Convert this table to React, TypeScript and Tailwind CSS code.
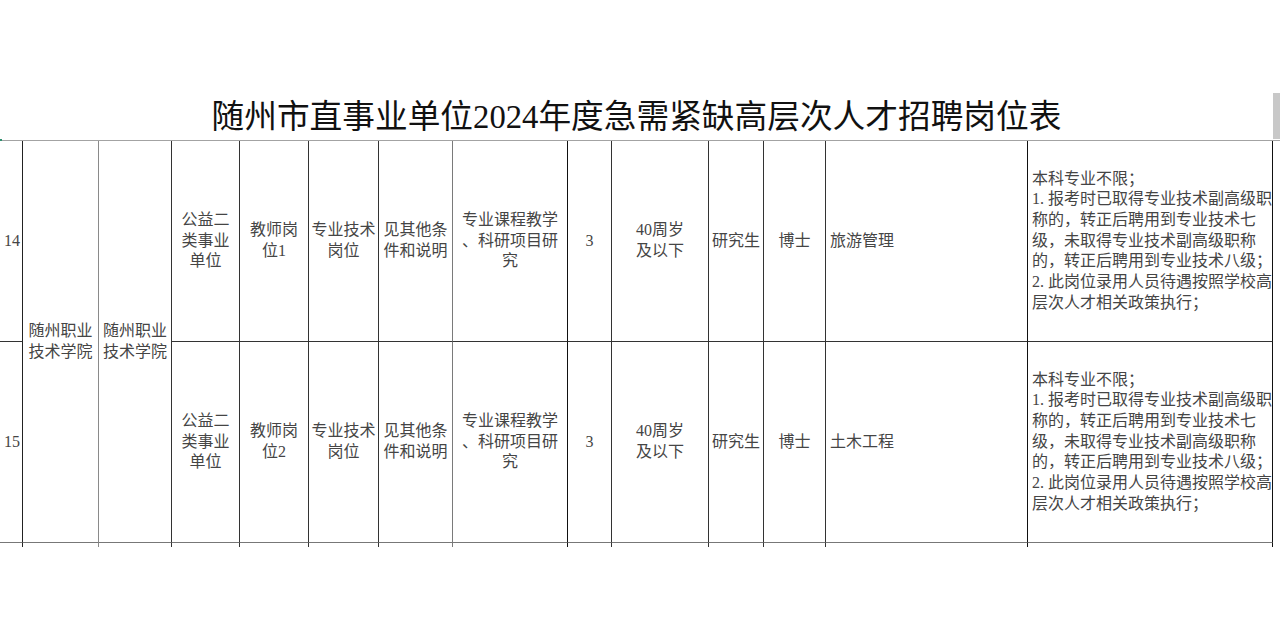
const FONT = "font-['Liberation_Serif','Noto_Sans_CJK_SC',serif]";

const remark = [
  "本科专业不限；",
  "1. 报考时已取得专业技术副高级职",
  "称的，转正后聘用到专业技术七",
  "级，未取得专业技术副高级职称",
  "的，转正后聘用到专业技术八级；",
  "2. 此岗位录用人员待遇按照学校高",
  "层次人才相关政策执行；",
];

interface Row {
  no: string;
  post: string;
  major: string;
}

const rows: Row[] = [
  { no: "14", post: "位1", major: "旅游管理" },
  { no: "15", post: "位2", major: "土木工程" },
];

// right-border colour per column, written out in full for Tailwind
const edge = [
  "border-[#222]",
  "border-[#8a8a8a]",
  "border-[#333]",
  "border-[#333]",
  "border-[#333]",
  "border-[#333]",
  "border-[#7a7a7a]",
  "border-[#111]",
  "border-[#333]",
  "border-[#333]",
  "border-[#333]",
  "border-[#333]",
  "border-[#111]",
  "border-[#111]",
];

function Lines({ lines }: { lines: string[] }) {
  return (
    <>
      {lines.map((l, i) => (
        <span key={i} className="block whitespace-nowrap">
          {l}
        </span>
      ))}
    </>
  );
}

function Cell({
  col,
  children,
  left,
  last,
}: {
  col: number;
  children?: React.ReactNode;
  left?: boolean;
  last?: boolean;
}) {
  return (
    <div
      className={`flex flex-col justify-center border-r ${edge[col]} ${
        last ? "border-b border-b-[#777]" : "border-b border-b-[#333]"
      } ${left ? "items-start pl-1 text-left" : "items-center text-center"}`}
    >
      {children}
    </div>
  );
}

export default function App() {
  return (
    <div className={`relative h-[640px] w-[1280px] overflow-hidden bg-white ${FONT}`}>
      <div className="flex h-[140px]">
        <div className="flex w-[1273px] items-end justify-center pb-[3px]">
          <h1 className="text-[32.7px] leading-[40px] font-normal text-[#111]">
            随州市直事业单位2024年度急需紧缺高层次人才招聘岗位表
          </h1>
        </div>
        <div className="flex w-[7px] flex-col">
          <div className="h-[93px]" />
          <div className="h-[46px] bg-[#c8c8c8]" />
        </div>
      </div>

      <div className="border-t border-[#a3a3a3]">
        <div className="grid grid-cols-[23px_76px_73px_68px_69px_70px_74px_115px_44px_97px_55px_62px_202px_245px] grid-rows-[201px_201px_4px] text-[16px] leading-[20.7px] text-[#454545]">
          {/* row 14 */}
          <Cell col={0} left>
            {rows[0].no}
          </Cell>
          <div className={`row-span-2 flex flex-col items-center justify-center border-r border-b border-b-[#777] text-center ${edge[1]}`}>
            <Lines lines={["随州职业", "技术学院"]} />
          </div>
          <div className={`row-span-2 flex flex-col items-center justify-center border-r border-b border-b-[#777] text-center ${edge[2]}`}>
            <Lines lines={["随州职业", "技术学院"]} />
          </div>
          <RowCells row={rows[0]} last={false} />

          {/* row 15 */}
          <Cell col={0} left last>
            {rows[1].no}
          </Cell>
          <RowCells row={rows[1]} last />

          {/* table continues below the fold */}
          {edge.map((c, i) => (
            <div key={i} className={`border-r ${c}`} />
          ))}
        </div>
      </div>

      <div className="absolute top-[139px] left-0 h-[2px] w-[2px] bg-[#2f8f6f]" />
    </div>
  );
}

function RowCells({ row, last }: { row: Row; last: boolean }) {
  return (
    <>
      <Cell col={3} last={last}>
        <Lines lines={["公益二", "类事业", "单位"]} />
      </Cell>
      <Cell col={4} last={last}>
        <Lines lines={["教师岗", row.post]} />
      </Cell>
      <Cell col={5} last={last}>
        <Lines lines={["专业技术", "岗位"]} />
      </Cell>
      <Cell col={6} last={last}>
        <Lines lines={["见其他条", "件和说明"]} />
      </Cell>
      <Cell col={7} last={last}>
        <Lines lines={["专业课程教学", "、科研项目研", "究"]} />
      </Cell>
      <Cell col={8} last={last}>
        3
      </Cell>
      <Cell col={9} last={last}>
        <Lines lines={["40周岁", "及以下"]} />
      </Cell>
      <Cell col={10} last={last}>
        研究生
      </Cell>
      <Cell col={11} last={last}>
        博士
      </Cell>
      <Cell col={12} left last={last}>
        {row.major}
      </Cell>
      <Cell col={13} left last={last}>
        <Lines lines={remark} />
      </Cell>
    </>
  );
}
